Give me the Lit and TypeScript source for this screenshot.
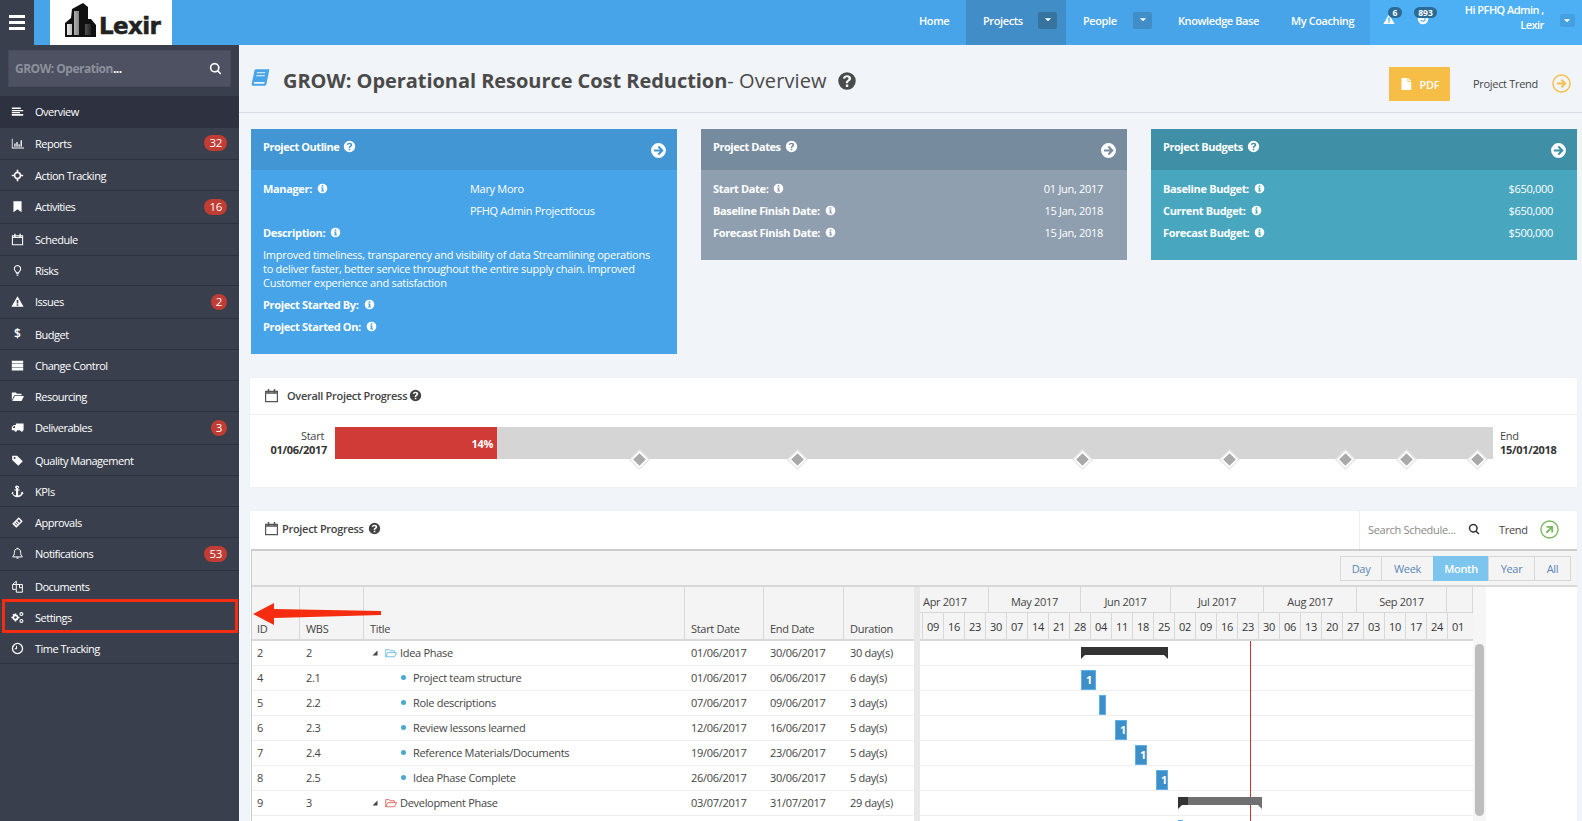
import { LitElement, html, css, svg } from "lit";
import { customElement } from "lit/decorators.js";

const CIRCLE = "M8 1a7 7 0 1 0 0 14a7 7 0 1 0 0-14z";
const glyphs: Record<string, any> = {
  overview: svg`<path d="M1 3h11v2H1zM1 6h14v1.600H1zM1 8.600h10v1.600H1zM1 11.200h14v2H1z"/>`,
  chart: svg`<path d="M1 2h1v11h14v1H1zM4 8h1.600v4H4zM6.600 6h1.600v6H6.600zM9.200 9h1.600v3H9.200zM11.800 4h1.600v8h-1.600z"/>`,
  target: svg`<circle cx="8" cy="8" r="3.600" fill="none" stroke="currentColor" stroke-width="1.800"/><path d="M7 1h2v4H7zM7 11h2v4H7zM1 7h4v2H1zM11 7h4v2h-4z"/>`,
  bookmark: svg`<path d="M3 1.500h10V15l-5-3.600L3 15z"/>`,
  calendar: svg`<path fill="none" stroke="currentColor" stroke-width="1.300" d="M1.700 3.500h12.600v11H1.700z"/><path d="M4 1h1.600v3.600H4zM10.400 1H12v3.600h-1.600zM2 4.500h12v1.500H2z"/>`,
  bulb: svg`<path fill="none" stroke="currentColor" stroke-width="1.300" d="M8 1.800a4 4 0 0 0-2.300 7.200c.6.500.7 1.100.8 1.800h3c.1-.7.2-1.300.8-1.800A4 4 0 0 0 8 1.800z"/><path d="M6.500 11.500h3v1.200h-3zM7 13.300h2v1.200H7z"/>`,
  warn: svg`<path fill-rule="evenodd" d="M8 1.500l7.500 13h-15zM7 6v4.500h2V6zM7 11.300v1.800h2v-1.800z"/>`,
  server: svg`<path d="M1 2h14v3.400H1zM1 6.300h14v3.400H1zM1 10.600h14V14H1z"/>`,
  folder: svg`<path d="M1 3h5l1.300 1.500H13V6.500H4L1 12.500zM4.700 7.500H16l-3 6H1.500z"/>`,
  truck: svg`<path fill-rule="evenodd" d="M6 3h9.500v8.500H15a1.800 1.800 0 1 1-3.600 0H7.600a1.800 1.800 0 1 1-3.600 0H1V7.500L3.500 5H6zM2.500 7.700V8.500H5V6H4.200z"/>`,
  tag: svg`<path fill-rule="evenodd" d="M1.500 2H7.500l7 7-5.500 5.500-7.500-7zM4.500 3.700a1.200 1.200 0 1 0 0 2.400a1.200 1.200 0 1 0 0-2.400z"/>`,
  anchor: svg`<path d="M8 .8a1.900 1.900 0 0 1 .8 3.600v1h2v1.500h-2v6.100c2-.2 3.500-1.200 4-2.500l-1.300-.3L14 8l1.500 3.200-1.200-.2C13.600 13.300 11 15 8 15s-5.600-1.700-6.300-4L.5 11.200 2 8l1.500 2.200-1.300.3c.5 1.300 2 2.300 4 2.500V6.900h-2V5.400h2v-1A1.900 1.900 0 0 1 8 .8zM8 2a.7.7 0 1 0 0 1.400A.7.7 0 0 0 8 2z" fill-rule="evenodd"/>`,
  ticket: svg`<path fill-rule="evenodd" d="M9.500 1.500l5 5L6.500 14.500l-5-5zM9.500 4L7.800 5.700l2.500 2.500L12 6.500zM6.800 6.700L6 7.500l2.500 2.500.8-.8zM5 8.500l-.8.8 2.500 2.500.8-.8z"/>`,
  bell: svg`<path fill="none" stroke="currentColor" stroke-width="1.200" d="M8 2.200c-2.600 0-3.800 1.900-3.800 4.200 0 3-1 4.600-2.200 5.800h12c-1.200-1.200-2.200-2.800-2.200-5.800 0-2.300-1.200-4.200-3.800-4.200z"/><path d="M7.200.8h1.600v1.600H7.200zM6.500 13h3a1.500 1.500 0 0 1-3 0z"/>`,
  files: svg`<path fill="none" stroke="currentColor" stroke-width="1.200" d="M6.500 1.500L2 5.500v6h4M6.500 1.500V5.500H2M6.500 5.500h7.500v9.500H6.500zM10.500 5.500V9.500h3.500"/>`,
  cogs: svg`<circle cx="5.500" cy="8" r="2.600" fill="none" stroke="currentColor" stroke-width="2"/><path d="M4.500 3h2v2h-2zM4.500 11h2v2h-2zM.5 7h2v2h-2zM8.500 7h2v2h-2zM1.800 4.700l1.400-1.400 1.300 1.300-1.400 1.400zM6.500 9.400l1.400-1.400 1.300 1.300-1.400 1.400z"/><circle cx="12.800" cy="3.800" r="1.800" fill="none" stroke="currentColor" stroke-width="1.400"/><circle cx="12.800" cy="12.200" r="1.800" fill="none" stroke="currentColor" stroke-width="1.400"/>`,
  clock: svg`<path fill-rule="evenodd" d="${CIRCLE}M8 2.600a5.400 5.400 0 1 1 0 10.800a5.400 5.400 0 0 1 0-10.800zM7.300 4.500v4.300H4.500V7.600h1.600V4.500z"/>`,
  search: svg`<path fill-rule="evenodd" d="M7 1a6 6 0 0 1 4.800 9.600l3.400 3.400-1.400 1.400-3.400-3.400A6 6 0 1 1 7 1zM7 3a4 4 0 1 0 0 8a4 4 0 0 0 0-8z"/>`,
  info: svg`<path fill-rule="evenodd" d="${CIRCLE}M6.800 3.400h2.400v2H6.800zM6 6.500h3.200v4.300H10.200v1.400H6v-1.400h1V7.900H6z"/>`,
  help: svg`<path fill-rule="evenodd" d="${CIRCLE}M8 3.300c-1.900 0-3.100 1-3.300 2.600l1.800.3c.1-.8.6-1.200 1.400-1.200s1.300.4 1.300 1c0 .5-.3.800-1 1.300-.9.600-1.100 1.100-1.100 2v.5h1.800v-.4c0-.5.2-.7.9-1.200.9-.6 1.500-1.200 1.500-2.200 0-1.700-1.300-2.700-3.100-2.700zM7.100 10.800H9v1.900H7.100z"/>`,
  go: svg`<path fill-rule="evenodd" d="${CIRCLE}M8.500 3.600l4.400 4.400-4.400 4.400-1.300-1.300 2.100-2.100H3.800V7h5.500L7.200 4.900z"/>`,
  book: svg`<path d="M4.500 1H15.500L13 13.500c-.2.900-.9 1.500-1.900 1.500H2c-1 0-1.600-.7-1.400-1.700L2.900 2.300C3 1.500 3.700 1 4.500 1zM5 3.500l-.2 1H12l.2-1zM4.500 6l-.2 1h7.200l.2-1zM2.300 12.500c-.1.500.2.800.7.800h8.200l.3-1.500H3c-.4 0-.6.300-.7.700z" fill-rule="evenodd"/>`,
  doc: svg`<path d="M2 0h8v5h5v11H2zM11 0l4 4h-4z"/>`,
  caret: svg`<path d="M3 5h10l-5 5z"/>`,
  tri: svg`<path d="M12 4v8H4z"/>`,
  folderline: svg`<path fill="none" stroke="currentColor" stroke-width="1.100" stroke-linejoin="round" d="M1 13V3.500h4.500l1.200 1.500h5.800v2.500M1 13l2.800-5.500H15.500L12.700 13z"/>`,
  ring: svg`<path fill-rule="evenodd" d="${CIRCLE}M8 4.300a3.700 3.700 0 1 1-3.500 4.900l1.500-.3A2.200 2.200 0 1 0 8 5.800V7.500L5.300 5 8 2.500z"/>`,
  ringArrow: svg`<path fill="none" stroke="currentColor" stroke-width="1.200" d="M8 .8a7.200 7.200 0 1 0 0 14.400A7.200 7.200 0 0 0 8 .8z"/><path d="M8.500 4.300l3.700 3.700-3.700 3.700-1.100-1.100 1.800-1.800H4.200V7.200h5l-1.800-1.800z"/>`,
  ringNE: svg`<path fill="none" stroke="currentColor" stroke-width="1.200" d="M8 .8a7.200 7.200 0 1 0 0 14.400A7.200 7.200 0 0 0 8 .8z"/><path d="M5.500 5h5.600v5.600H9.500V7.700L5.900 11.300 4.800 10.200 8.400 6.600H5.500z"/>`,
};

const icon = (n: string, cls = "ic") =>
  html`<svg class=${cls} viewBox="0 0 16 16" fill="currentColor" aria-hidden="true">${glyphs[n]}</svg>`;

type MenuItem = { label: string; icon?: string; glyph?: string; h: number; badge?: string; active?: boolean; flagged?: boolean };
const MENU: MenuItem[] = [
  { label: "Overview", icon: "overview", h: 32, active: true },
  { label: "Reports", icon: "chart", h: 32, badge: "32" },
  { label: "Action Tracking", icon: "target", h: 31 },
  { label: "Activities", icon: "bookmark", h: 33, badge: "16" },
  { label: "Schedule", icon: "calendar", h: 32 },
  { label: "Risks", icon: "bulb", h: 30 },
  { label: "Issues", icon: "warn", h: 33, badge: "2" },
  { label: "Budget", glyph: "$", h: 31 },
  { label: "Change Control", icon: "server", h: 31 },
  { label: "Resourcing", icon: "folder", h: 31 },
  { label: "Deliverables", icon: "truck", h: 33, badge: "3" },
  { label: "Quality Management", icon: "tag", h: 31 },
  { label: "KPIs", icon: "anchor", h: 31 },
  { label: "Approvals", icon: "ticket", h: 31 },
  { label: "Notifications", icon: "bell", h: 33, badge: "53" },
  { label: "Documents", icon: "files", h: 31 },
  { label: "Settings", icon: "cogs", h: 31, flagged: true },
  { label: "Time Tracking", icon: "clock", h: 31 },
];

const ROWS = [
  { id: "2", wbs: "2", title: "Idea Phase", start: "01/06/2017", end: "30/06/2017", dur: "30 day(s)", kind: "idea" },
  { id: "4", wbs: "2.1", title: "Project team structure", start: "01/06/2017", end: "06/06/2017", dur: "6 day(s)", kind: "task" },
  { id: "5", wbs: "2.2", title: "Role descriptions", start: "07/06/2017", end: "09/06/2017", dur: "3 day(s)", kind: "task" },
  { id: "6", wbs: "2.3", title: "Review lessons learned", start: "12/06/2017", end: "16/06/2017", dur: "5 day(s)", kind: "task" },
  { id: "7", wbs: "2.4", title: "Reference Materials/Documents", start: "19/06/2017", end: "23/06/2017", dur: "5 day(s)", kind: "task" },
  { id: "8", wbs: "2.5", title: "Idea Phase Complete", start: "26/06/2017", end: "30/06/2017", dur: "5 day(s)", kind: "task" },
  { id: "9", wbs: "3", title: "Development Phase", start: "03/07/2017", end: "31/07/2017", dur: "29 day(s)", kind: "dev" },
];

const MONTHS = [
  { t: "Apr 2017", w: 69, align: "left" },
  { t: "May 2017", w: 92 },
  { t: "Jun 2017", w: 90 },
  { t: "Jul 2017", w: 93 },
  { t: "Aug 2017", w: 93 },
  { t: "Sep 2017", w: 90 },
  { t: "", w: 26 },
];
const WEEKS = "09 16 23 30 07 14 21 28 04 11 18 25 02 09 16 23 30 06 13 20 27 03 10 17 24 01".split(" ");

const BARS = [
  { l: 161, w: 15, t: 29, label: "1" },
  { l: 179, w: 7, t: 54, label: "" },
  { l: 195, w: 12, t: 79, label: "1" },
  { l: 215, w: 12, t: 104, label: "1" },
  { l: 236, w: 12, t: 129, label: "1" },
];
const MILESTONES = [304, 462, 747, 894, 1010, 1071, 1142];

type Field = { k: string; v: string };
const DATES: Field[] = [
  { k: "Start Date:", v: "01 Jun, 2017" },
  { k: "Baseline Finish Date:", v: "15 Jan, 2018" },
  { k: "Forecast Finish Date:", v: "15 Jan, 2018" },
];
const BUDGETS: Field[] = [
  { k: "Baseline Budget:", v: "$650,000" },
  { k: "Current Budget:", v: "$650,000" },
  { k: "Forecast Budget:", v: "$500,000" },
];

@customElement("app-root")
export class AppRoot extends LitElement {
  static styles = css`
    :host {
      display: block;
      position: relative;
      width: 1582px;
      height: 821px;
      overflow: hidden;
      background: #f1f4f8;
      font-family: "Open Sans", "Noto Sans", sans-serif;
      font-size: 11px;
      color: #444;
      letter-spacing: -0.3px;
    }
    svg { display: block; flex: none; }
    .ic { width: 16px; height: 16px; }

    /* Top bar */
    .top { display: flex; height: 45px; background: #48a4e8; color: #fff; }
    .burger { width: 34px; background: #3a3f4e; display: flex; flex-direction: column; justify-content: center; gap: 3px; padding: 0 9px; box-sizing: border-box; }
    .burger i { display: block; height: 3px; background: #fff; }
    .logo { margin-left: 16px; width: 122px; background: #fff; display: flex; align-items: flex-end; padding: 0 0 9px 14px; box-sizing: border-box; gap: 1px; }
    .logo svg { width: 34px; height: 34px; margin-bottom: -1px; }
    .logo span { font-family: "DejaVu Sans", sans-serif; font-weight: 700; font-size: 23px; line-height: 20px; color: #222; letter-spacing: -0.6px; -webkit-text-stroke: 0.5px #222; }
    .nav { margin-left: auto; display: flex; align-items: stretch; }
    .nav a { display: flex; align-items: center; justify-content: space-between; font-weight: 600; font-size: 11px; letter-spacing: -0.4px; color: #fff; box-sizing: border-box; padding-bottom: 5px; }
    .n-home { width: 47px; }
    .n-proj { width: 100px; background: #418dc7; padding: 0 9px 5px 17px; }
    .n-people { width: 112px; padding: 0 26px 5px 17px; }
    .n-kb { width: 113px; }
    .n-coach { width: 79px; }
    .dd { width: 19px; height: 17px; border-radius: 2px; background: #418dc7; display: flex; align-items: center; justify-content: center; }
    .dd .ic { width: 10px; height: 10px; }
    .n-proj .dd { background: #36749f; }
    .user { width: 212px; background: #4db0f5; display: flex; align-items: stretch; box-sizing: border-box; }
    .alerts { display: flex; gap: 22px; padding: 13px 0 0 13px; }
    .al { position: relative; width: 12px; height: 12px; }
    .al .ic { width: 12px; height: 12px; }
    .al b { position: absolute; top: -6px; background: #2a6a94; border-radius: 7px; box-sizing: border-box; height: 11px; line-height: 11px; font-size: 8.500px; text-align: center; letter-spacing: 0; font-weight: 700; }
    .al .b1 { left: 5px; width: 14px; }
    .al .b2 { left: -3px; width: 23px; }
    .hi { margin-left: auto; text-align: right; font-weight: 600; font-size: 11px; line-height: 15px; padding-top: 2px; width: 120px; letter-spacing: -0.55px; }
    .user .dd { background: #45a0e0; margin: 14px 7px 0 16px; width: 16px; height: 13px; }

    /* Frame */
    .frame { display: grid; grid-template-columns: 239px 1fr; height: 776px; }
    .side { background: #3a3f4e; color: #fff; padding-top: 5px; }
    .searchbox { margin: 0 8px 9px; height: 37px; background: #4d5162; border: 1px solid #464a5a; box-sizing: border-box; display: flex; align-items: center; justify-content: space-between; padding: 0 8px 0 6px; font-weight: 700; font-size: 12px; color: #8d909b; letter-spacing: -0.5px; }
    .searchbox em { font-style: normal; color: #fff; }
    .searchbox .ic { width: 13px; height: 13px; color: #fff; }
    .menu { display: flex; flex-direction: column; }
    .mi { display: flex; align-items: center; box-sizing: border-box; border-bottom: 1px solid #2e323f; padding: 0 12px 1px 0; font-size: 11px; letter-spacing: -0.5px; color: #fff; position: relative; }
    .mi.short { padding-bottom: 0; }
    .mi.active { background: #2d3140; border-bottom: none; }
    .mi .ic { width: 13px; height: 13px; margin-left: 11px; }
    .mi .slot { width: 35px; display: flex; flex: none; }
    .mi .dollar { margin-left: 14px; font-weight: 600; font-size: 12px; line-height: 12px; }
    .badge { margin-left: auto; background: #c13c33; border-radius: 8px; height: 16px; min-width: 16px; padding: 0 5px; box-sizing: border-box; font-size: 11.500px; line-height: 16px; text-align: center; letter-spacing: -0.3px; }
    .badge.one { padding: 0; }
    .flag { position: absolute; left: 2px; right: 1px; top: -3px; bottom: -1px; border: 3px solid #f52c10; pointer-events: none; }

    /* Main */
    .main { overflow: hidden; min-width: 0; }
    .head { display: flex; align-items: center; height: 67px; border-bottom: 1px solid #d5dce5; padding: 0 11px 0 12px; }
    .head .book { width: 19px; height: 19px; color: #48a4e8; margin-right: 13px; margin-top: -2px; }
    .head h1 { margin: 4px 0 0; font-size: 20px; font-weight: 400; color: #4a4a4a; letter-spacing: -0.05px; display: flex; align-items: center; }
    .head h1 b { font-weight: 700; }
    .head h1 span { letter-spacing: 0.1px; }
    .head h1 .ic { width: 20px; height: 20px; margin-left: 10px; }
    .pdf { margin-left: auto; width: 61px; height: 34px; background: #f6bd47; color: #fff; display: flex; align-items: center; justify-content: center; gap: 8px; font-weight: 600; font-size: 11px; margin-top: 11px; }
    .pdf .ic { width: 12px; height: 14px; }
    .trend { display: flex; align-items: center; margin: 10px 0 0 23px; gap: 14px; font-size: 11px; color: #444; }
    .trend .ic { width: 19px; height: 19px; color: #f6bd47; }

    .cards { display: grid; grid-template-columns: repeat(3, 426px); gap: 24px; padding: 16px 0 0 12px; }
    .card { height: 225px; color: #fff; font-size: 11px; }
    .card.small { height: 131px; }
    .c-blue { background: #48a4e8; } .c-blue .chead { background: #4296d3; }
    .c-grey { background: #8f9fb0; } .c-grey .chead { background: #778b9f; }
    .c-teal { background: #48a7bf; } .c-teal .chead { background: #3f8fa6; }
    .chead { height: 41px; display: flex; align-items: flex-start; padding: 10px 10px 0 12px; box-sizing: border-box; font-weight: 700; letter-spacing: -0.45px; gap: 4px; }
    .chead .q { width: 13px; height: 13px; margin-top: 1px; }
    .chead .go { margin-left: auto; margin-top: 3px; width: 17px; height: 17px; }
    .cbody { padding: 7px 24px 0 12px; display: flex; flex-direction: column; }
    .line { display: flex; align-items: center; height: 22px; }
    .line b { font-weight: 700; display: flex; align-items: center; gap: 5px; letter-spacing: -0.35px; }
    .line b .ic { width: 11px; height: 11px; }
    .line .v { margin-left: auto; }
    .line .labeled { width: 207px; flex: none; }
    .line .col2 { margin-left: 207px; }
    .desc { line-height: 14px; margin: 5px -11px 3px 0; width: 395px; letter-spacing: -0.27px; }

    .panel { background: #fff; margin: 24px 0 0 11px; width: 1327px; box-shadow: 0 0 2px rgba(0,0,0,.05); }
    .ph { display: flex; align-items: center; height: 35px; border-bottom: 1px solid #eee; padding: 0 0 1px 14px; font-size: 11px; color: #444; font-weight: 600; }
    .ph .cal { width: 15px; height: 15px; color: #555; margin-right: 8px; }
    .ph .q { width: 13px; height: 13px; margin-left: 2px; color: #444; }
    .pb { display: flex; height: 72px; padding-top: 12px; box-sizing: border-box; }
    .pl { width: 85px; flex: none; padding: 2px 8px 0 0; box-sizing: border-box; text-align: right; line-height: 14px; color: #444; }
    .pl span { margin-right: 3px; }
    .pl b { color: #333; font-weight: 700; }
    .pr { text-align: left; padding: 2px 0 0 7px; width: 84px; box-sizing: border-box; line-height: 14px; color: #444; }
    .pr b { color: #333; font-weight: 700; }
    .track { position: relative; width: 1158px; height: 32px; background: #d5d5d5; }
    .fill { height: 100%; background: #d03b37; color: #fff; font-weight: 700; font-size: 11px; display: flex; align-items: center; justify-content: flex-end; padding-right: 4px; box-sizing: border-box; }
    .ms { position: absolute; top: 26px; width: 13px; height: 13px; box-sizing: border-box; transform: rotate(45deg); background: #aaa; border: 2px solid #fff; outline: 1px solid #e6e6e6; }

    .panel.g { margin-top: 24px; height: 400px; }
    .gh { display: flex; height: 38px; align-items: stretch; }
    .gtitle { display: flex; align-items: center; padding: 0 0 3px 14px; font-weight: 600; color: #444; flex: 1; }
    .gtitle .cal { width: 15px; height: 15px; color: #555; margin-right: 3px; }
    .gtitle .q { width: 13px; height: 13px; margin-left: 4px; }
    .gtools { width: 218px; flex: none; display: flex; align-items: center; border-left: 1px solid #eee; padding: 0 0 2px 8px; box-sizing: border-box; white-space: nowrap; }
    .gtools .ph-s { color: #888; width: 100px; flex: none; }
    .gtools .s { width: 12px; height: 12px; color: #333; }
    .gtools .tr { margin-left: 19px; color: #444; }
    .gtools .ne { width: 19px; height: 19px; color: #7cb860; margin-left: 12px; }

    .gantt { border: 1px solid #ccc; border-width: 2px 0 0 1px; margin-left: 1px; }
    .toolbar { height: 36px; background: #f4f4f4; border-bottom: 2px solid #d8d8d8; display: flex; justify-content: flex-end; align-items: flex-start; padding: 5px 6px 0 0; box-sizing: border-box; }
    .toolbar span { height: 25px; line-height: 24px; box-sizing: border-box; border: 1px solid #d8d8d8; margin-left: -1px; text-align: center; color: #5b86b8; font-size: 11px; }
    .toolbar .on { background: #7cc5ee; color: #fff; border-color: #7cc5ee; font-weight: 600; }

    .split { display: flex; }
    .table { width: 662px; flex: none; }
    .tr-h, .tr-b { display: grid; grid-template-columns: 48px 64px 321px 79px 80px 70px; }
    .tr-h { height: 54px; background: #f4f4f4; border-bottom: 2px solid #d8d8d8; box-sizing: border-box; }
    .tr-h div { border-right: 1px solid #d8d8d8; padding: 34px 0 0 6px; color: #444; }
    .tr-h div:nth-child(1) { padding-left: 5px; }
    .tr-h div:last-child { border-right: none; }
    .tr-b { height: 25px; align-items: center; border-bottom: 1px solid #eee; box-sizing: border-box; padding-bottom: 1px; }
    .tr-b > div { padding-left: 6px; white-space: nowrap; color: #444; }
    .tr-b > div:nth-child(1) { padding-left: 5px; }
    .title { display: flex; align-items: center; }
    .title .tg { width: 10px; height: 10px; color: #444; }
    .title .fo { width: 12px; height: 12px; margin: 0 3px 0 5px; }
    .title .fo.idea { color: #5cb4de; }
    .title .fo.dev { color: #d9534f; }
    .title .dot { width: 5px; height: 5px; border-radius: 50%; background: #48a9d0; margin: 0 7px 0 31px; }
    .sash { width: 6px; background: #e8e8e8; flex: none; }
    .chart { width: 553px; flex: none; position: relative; }
    .months { display: flex; height: 26px; background: #f4f4f4; border-bottom: 1px solid #d8d8d8; box-sizing: border-box; }
    .months div { box-sizing: border-box; border-right: 1px solid #d8d8d8; text-align: center; line-height: 29px; color: #444; }
    .months div.l { text-align: left; padding-left: 3px; }
    .weeks { display: flex; height: 28px; background: #f4f4f4; border-bottom: 2px solid #d8d8d8; box-sizing: border-box; padding-left: 2px; }
    .weeks div { width: 21px; box-sizing: border-box; border-left: 1px solid #d8d8d8; text-align: center; padding-top: 2px; line-height: 24px; color: #333; }
    .lane { height: 25px; border-bottom: 1px solid #eee; box-sizing: border-box; }
    .canvas { position: absolute; left: 0; right: 0; top: 54px; bottom: 0; overflow: hidden; }
    .now { position: absolute; left: 330px; top: 0; bottom: 0; width: 1px; background: #d0302a; }
    .sum { position: absolute; height: 8px; background: #333; }
    .sum::before, .sum::after { content: ""; position: absolute; top: 8px; border-top: 4px solid #333; }
    .sum::before { left: 0; border-right: 4px solid transparent; }
    .sum::after { right: 0; border-left: 4px solid transparent; }
    .sum.dev { background: #707070; }
    .sum.dev::after { border-top-color: #707070; }
    .sum.dev i { display: block; width: 10px; height: 8px; background: #333; }
    .bar { position: absolute; height: 20px; background: #3e8fc7; border: 1px solid #5bb0ea; box-sizing: border-box; color: #fff; font-weight: 700; line-height: 18px; overflow: hidden; padding-left: 4px; white-space: nowrap; }
    .scroll { width: 13px; flex: none; background: #f6f6f6; position: relative; }
    .thumb { position: absolute; left: 2px; top: 57px; width: 9px; height: 172px; border-radius: 5px; background: #bdbdbd; }

    .arrow { position: absolute; left: 252px; top: 603px; width: 131px; height: 24px; pointer-events: none; }
  `;

  private logo() {
    return html`<div class="logo">
      <svg viewBox="0 0 34 34" aria-hidden="true">
        <defs><linearGradient id="lg" x1="0" x2="1" y1="0" y2="0"><stop offset="0" stop-color="#e8e8e8"/><stop offset="1" stop-color="#222"/></linearGradient></defs>
        <path d="M8 6L19 0l5 4v12l3 0 5 6v12H1V20l6-5z" fill="#111"/>
        <path d="M3 21h5v11H3zM21 21h6v11h-6zM10 8h5v24h-5z" fill="url(#lg)"/>
      </svg>
      <span>Lexir</span>
    </div>`;
  }

  private info() { return icon("info"); }

  private fieldCard(title: string, cls: string, rows: Field[]) {
    return html`<section class="card small ${cls}">
      <div class="chead"><span>${title}</span>${icon("help", "q")}${icon("go", "go")}</div>
      <div class="cbody">
        ${rows.map((r) => html`<div class="line"><b>${r.k} ${this.info()}</b><span class="v">${r.v}</span></div>`)}
      </div>
    </section>`;
  }

  render() {
    return html`
      <header class="top">
        <div class="burger"><i></i><i></i><i></i></div>
        ${this.logo()}
        <nav class="nav">
          <a class="n-home">Home</a>
          <a class="n-proj">Projects <span class="dd">${icon("caret")}</span></a>
          <a class="n-people">People <span class="dd">${icon("caret")}</span></a>
          <a class="n-kb">Knowledge Base</a>
          <a class="n-coach">My Coaching</a>
          <div class="user">
            <div class="alerts">
              <span class="al">${icon("warn")}<b class="b1">6</b></span>
              <span class="al">${icon("ring")}<b class="b2">893</b></span>
            </div>
            <div class="hi">Hi PFHQ Admin ,<br />Lexir</div>
            <span class="dd">${icon("caret")}</span>
          </div>
        </nav>
      </header>
      <div class="frame">
        <aside class="side">
          <div class="searchbox"><span>GROW: Operation<em>...</em></span>${icon("search")}</div>
          <div class="menu">
            ${MENU.map((m) => html`<div class="mi ${m.active ? "active" : ""} ${m.h === 31 ? "short" : ""}" style="height:${m.h}px">
              <span class="slot">${m.glyph ? html`<span class="dollar">${m.glyph}</span>` : icon(m.icon!)}</span>
              <span>${m.label}</span>
              ${m.badge ? html`<span class="badge ${m.badge.length === 1 ? "one" : ""}">${m.badge}</span>` : ""}
              ${m.flagged ? html`<span class="flag"></span>` : ""}
            </div>`)}
          </div>
        </aside>
        <main class="main">
          <div class="head">
            ${icon("book", "book")}
            <h1><b>GROW: Operational Resource Cost Reduction</b><span>- Overview</span> ${icon("help")}</h1>
            <div class="pdf">${icon("doc")}PDF</div>
            <div class="trend">Project Trend ${icon("ringArrow")}</div>
          </div>
          <div class="cards">
            <section class="card c-blue">
              <div class="chead"><span>Project Outline</span>${icon("help", "q")}${icon("go", "go")}</div>
              <div class="cbody">
                <div class="line"><span class="labeled"><b>Manager: ${this.info()}</b></span><span>Mary Moro</span></div>
                <div class="line"><span class="col2">PFHQ Admin Projectfocus</span></div>
                <div class="line"><b>Description: ${this.info()}</b></div>
                <div class="desc">Improved timeliness, transparency and visibility of data Streamlining operations to deliver faster, better service throughout the entire supply chain. Improved Customer experience and satisfaction</div>
                <div class="line"><b>Project Started By: ${this.info()}</b></div>
                <div class="line"><b>Project Started On: ${this.info()}</b></div>
              </div>
            </section>
            ${this.fieldCard("Project Dates", "c-grey", DATES)}
            ${this.fieldCard("Project Budgets", "c-teal", BUDGETS)}
          </div>

          <section class="panel">
            <div class="ph">${icon("calendar", "cal")}Overall Project Progress${icon("help", "q")}</div>
            <div class="pb">
              <div class="pl"><span>Start</span><br /><b>01/06/2017</b></div>
              <div class="track">
                <div class="fill" style="width:14%">14%</div>
                ${MILESTONES.map((x) => html`<i class="ms" style="left:${x - 6.5}px"></i>`)}
              </div>
              <div class="pr">End<br /><b>15/01/2018</b></div>
            </div>
          </section>

          <section class="panel g">
            <div class="gh">
              <div class="gtitle">${icon("calendar", "cal")}Project Progress${icon("help", "q")}</div>
              <div class="gtools">
                <span class="ph-s">Search Schedule...</span>${icon("search", "s")}
                <span class="tr">Trend</span>${icon("ringNE", "ne")}
              </div>
            </div>
            <div class="gantt">
              <div class="toolbar">
                ${[["Day", 42], ["Week", 53], ["Month", 56], ["Year", 47], ["All", 37]].map(
                  ([t, w]) => html`<span class=${t === "Month" ? "on" : ""} style="width:${w}px">${t}</span>`
                )}
              </div>
              <div class="split">
                <div class="table">
                  <div class="tr-h"><div>ID</div><div>WBS</div><div>Title</div><div>Start Date</div><div>End Date</div><div>Duration</div></div>
                  ${ROWS.map((r) => html`<div class="tr-b">
                    <div>${r.id}</div><div>${r.wbs}</div>
                    <div class="title">
                      ${r.kind === "task" ? html`<i class="dot"></i>` : html`${icon("tri", "tg")}${icon("folderline", `fo ${r.kind}`)}`}
                      <span>${r.title}</span>
                    </div>
                    <div>${r.start}</div><div>${r.end}</div><div>${r.dur}</div>
                  </div>`)}
                  <div class="tr-b"></div>
                </div>
                <div class="sash"></div>
                <div class="chart">
                  <div class="months">
                    ${MONTHS.map((m) => html`<div class=${m.align === "left" ? "l" : ""} style="width:${m.w}px">${m.t}</div>`)}
                  </div>
                  <div class="weeks">${WEEKS.map((w) => html`<div>${w}</div>`)}</div>
                  ${ROWS.map(() => html`<div class="lane"></div>`)}
                  <div class="lane"></div>
                  <div class="canvas">
                    <div class="now"></div>
                    <div class="sum" style="left:161px;top:6px;width:87px"></div>
                    ${BARS.map((b) => html`<div class="bar" style="left:${b.l}px;top:${b.t}px;width:${b.w}px">${b.label}</div>`)}
                    <div class="sum dev" style="left:258px;top:156px;width:84px"><i></i></div>
                    <div class="bar" style="left:258px;top:179px;width:5px;padding:0"></div>
                  </div>
                </div>
                <div class="scroll"><div class="thumb"></div></div>
              </div>
            </div>
          </section>
        </main>
      </div>
      <svg class="arrow" viewBox="0 0 131 24" aria-hidden="true">
        <path d="M1 11L22 0l0 6L129 8l0 4L22 15l0 7z" fill="#f52c10"/>
      </svg>
    `;
  }
}
